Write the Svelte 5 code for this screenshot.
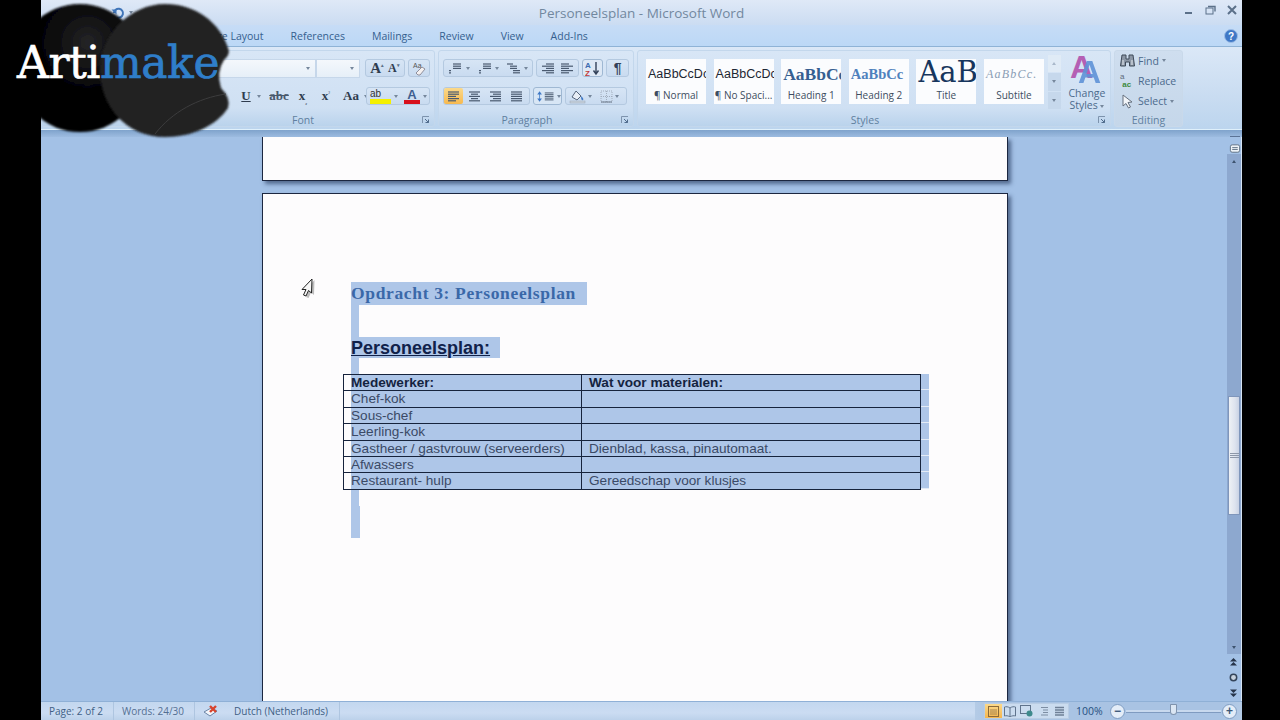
<script>
  const tabs = ['Page Layout', 'References', 'Mailings', 'Review', 'View', 'Add-Ins'];

  const gallery = [
    { sample: 'AaBbCcDc', name: '¶ Normal', kind: 'plain' },
    { sample: 'AaBbCcDc', name: '¶ No Spaci...', kind: 'plain' },
    { sample: 'AaBbCc', name: 'Heading 1', kind: 'h1' },
    { sample: 'AaBbCc', name: 'Heading 2', kind: 'h2' },
    { sample: 'AaB', name: 'Title', kind: 'title' },
    { sample: 'AaBbCc.', name: 'Subtitle', kind: 'sub' }
  ];

  const rows = [
    { left: 'Medewerker:', right: 'Wat voor materialen:', head: true, h: 16 },
    { left: 'Chef-kok', right: '', h: 17 },
    { left: 'Sous-chef', right: '', h: 16 },
    { left: 'Leerling-kok', right: '', h: 17 },
    { left: 'Gastheer / gastvrouw (serveerders)', right: 'Dienblad, kassa, pinautomaat.', h: 16 },
    { left: 'Afwassers', right: '', h: 16 },
    { left: 'Restaurant- hulp', right: 'Gereedschap voor klusjes', h: 17 }
  ];

  const alignments = [
    { on: true, lines: [[2, 13], [2, 13], [2, 10], [2, 13], [2, 10]] },
    { lines: [[2, 13], [4, 11], [2, 13], [4, 11], [2, 13]] },
    { lines: [[2, 13], [5, 13], [2, 13], [5, 13], [2, 13]] },
    { lines: [[2, 13], [2, 13], [2, 13], [2, 13], [2, 13]] }
  ];
</script>

{#snippet lines(list)}
  <svg width="15" height="13" viewBox="0 0 15 13">
    {#each list as l, i}
      <line x1={l[0]} x2={l[1]} y1={2 + i * 2.2} y2={2 + i * 2.2} stroke="#4a5a70" stroke-width="1.2" />
    {/each}
  </svg>
{/snippet}

{#snippet launcher()}
  <svg class="launcher" width="8" height="8" viewBox="0 0 8 8">
    <path d="M0.5 7V0.5H7" fill="none" stroke="#7d93ad" />
    <path d="M3 3l3.5 3.5M6.5 3.5v3h-3" fill="none" stroke="#4f6b8c" />
  </svg>
{/snippet}

<div class="screen">
  <div class="word">
    <header class="titlebar">
      <div class="quick">
        <svg width="14" height="14" viewBox="0 0 14 14">
          <path d="M3 7a4.5 4.5 0 1 1 3 4.5" fill="none" stroke="#3f74b8" stroke-width="2" />
          <path d="M0.5 3.5h5v5z" fill="#3f74b8" />
        </svg>
        <i class="caret"></i>
      </div>
      <div class="doc-title">Personeelsplan - Microsoft Word</div>
      <div class="winbtns">
        <svg width="10" height="10" viewBox="0 0 10 10"><rect x="1" y="7" width="7" height="2" fill="#5b7089" /></svg>
        <svg width="11" height="10" viewBox="0 0 11 10"><rect x="1" y="3" width="7" height="6" fill="none" stroke="#5b7089" /><path d="M3 1.5h7v5" fill="none" stroke="#5b7089" stroke-width="1.4" /></svg>
        <svg width="10" height="10" viewBox="0 0 10 10"><path d="M1 1l8 8M9 1l-8 8" stroke="#5b7089" stroke-width="2" /></svg>
      </div>
    </header>

    <nav class="tabs">
      {#each tabs as tab}
        <span>{tab}</span>
      {/each}
      <svg class="help" width="14" height="14" viewBox="0 0 14 14">
        <circle cx="7" cy="7" r="6.5" fill="#3f78c6" stroke="#9dbde6" />
        <text x="7" y="11" text-anchor="middle" font-size="10" font-weight="700" font-family="Liberation Sans, sans-serif" fill="#fff">?</text>
      </svg>
    </nav>

    <section class="ribbon">
      <div class="group clipboard">
        <div class="group-body"></div>
      </div>

      <div class="group font">
        <div class="group-body">
          <div class="tool-row right">
            <div class="combo wide"><i class="caret"></i></div>
            <div class="combo narrow"><i class="caret"></i></div>
            <div class="box grow-box">
              <span class="serif big">A<sup>▴</sup></span>
              <span class="serif small-a">A<sup>▾</sup></span>
            </div>
            <div class="box clear-box">
              <svg width="16" height="15" viewBox="0 0 16 15">
                <text x="2" y="7" font-size="7" font-family="Liberation Sans, sans-serif" fill="#555">Aa</text>
                <path d="M5 12l6-6 3 2-5 6H7z" fill="#f4f0f0" stroke="#8f8f9c" />
              </svg>
            </div>
          </div>
          <div class="tool-row right">
            <span class="tool serif u">U</span><i class="caret"></i>
            <span class="tool serif strike">abc</span>
            <span class="tool serif xs">x<sub>₂</sub></span>
            <span class="tool serif xs">x<sup>²</sup></span>
            <span class="tool serif aa">Aa</span><i class="caret"></i>
            <div class="box color-box">
              <span class="marker">ab</span><i class="caret"></i>
              <span class="font-color">A</span><i class="caret"></i>
            </div>
          </div>
        </div>
        <div class="group-label">Font {@render launcher()}</div>
      </div>

      <div class="group para">
        <div class="group-body">
          <div class="tool-row">
            <div class="box list-box">
              <span class="list-tool">{@render lines([[5, 13], [5, 13], [5, 13], [1, 3], [1, 3]])}<i class="caret"></i></span>
              <span class="list-tool">{@render lines([[6, 14], [6, 14], [6, 14], [2, 4], [2, 4]])}<i class="caret"></i></span>
              <span class="list-tool">{@render lines([[1, 7], [4, 11], [4, 11], [7, 14], [7, 14]])}<i class="caret"></i></span>
            </div>
            <div class="box indent-box">
              {@render lines([[6, 14], [2, 14], [6, 14], [2, 14], [6, 14]])}
              {@render lines([[1, 9], [1, 13], [1, 9], [1, 13], [1, 9]])}
            </div>
            <div class="box sort-box">
              <svg width="16" height="15" viewBox="0 0 16 15">
                <text x="0" y="7" font-size="8" font-weight="700" font-family="Liberation Sans, sans-serif" fill="#3b6bb0">A</text>
                <text x="0" y="14.5" font-size="8" font-weight="700" font-family="Liberation Sans, sans-serif" fill="#c23b3b">Z</text>
                <path d="M11 1v11M8.5 9.5L11 13l2.500-3.500" fill="none" stroke="#33425a" stroke-width="1.4" />
              </svg>
            </div>
            <div class="box pilcrow">¶</div>
          </div>
          <div class="tool-row">
            <div class="box align-box">
              {#each alignments as a}
                <span class="align" class:on={a.on}>{@render lines(a.lines)}</span>
              {/each}
            </div>
            <div class="box spacing-box">
              <svg width="9" height="15" viewBox="0 0 9 15">
                <path d="M4.500 1L1.500 5h6zM4.500 14l-3-4h6z" fill="#3f78c6" />
                <path d="M4.500 4v7" stroke="#3f78c6" />
              </svg>
              {@render lines([[1, 12], [1, 12], [1, 12], [1, 12], [1, 12]])}
              <i class="caret"></i>
            </div>
            <div class="box shade-box">
              <svg width="17" height="16" viewBox="0 0 17 16">
                <path d="M3 9l4-6 5 5-4 4z" fill="#e8eef6" stroke="#56657c" />
                <path d="M12 8c2 2 3 3 2 4s-2 0-2-4z" fill="#3f78c6" />
                <rect x="1" y="13" width="15" height="2" fill="#c9d3de" stroke="#98a5b5" stroke-width=".5" />
              </svg>
              <i class="caret"></i>
              <svg class="border-icon" width="13" height="13" viewBox="0 0 13 13">
                <rect x="1" y="1" width="11" height="11" fill="none" stroke="#a2aebd" stroke-dasharray="1 1" />
                <path d="M6.500 1v11M1 6.500h11" stroke="#a2aebd" stroke-dasharray="1 1" />
                <path d="M1 12h11" stroke="#6d7a8c" />
              </svg>
              <i class="caret"></i>
            </div>
          </div>
        </div>
        <div class="group-label">Paragraph {@render launcher()}</div>
      </div>

      <div class="group styles">
        <div class="group-body styles-body">
          <div class="gallery">
            {#each gallery as item}
              <div class="tile">
                <div class="sample {item.kind}">{item.sample}</div>
                <div class="tile-name">{item.name}</div>
              </div>
            {/each}
          </div>
          <div class="gallery-scroll">
            <span class="first-btn"><i class="caret up"></i></span>
            <span><i class="caret"></i></span>
            <span class="more"><i class="caret"></i></span>
          </div>
          <div class="change-styles">
            <div class="aa-icon"><b class="pink">A</b><b class="blue">A</b></div>
            <div class="change-label">Change<br />Styles <i class="caret"></i></div>
          </div>
        </div>
        <div class="group-label">Styles {@render launcher()}</div>
      </div>

      <div class="group editing">
        <div class="group-body edit-list">
          <div class="edit-item">
            <svg width="15" height="14" viewBox="0 0 15 14">
              <path d="M2 1h4v4h3V1h4l1.500 11H9.500V8h-4v4H.5z" fill="#8c97a6" stroke="#3f4a59" />
              <path d="M3 6v5M12 6v5" stroke="#e6ebf1" />
            </svg>
            Find <i class="caret"></i>
          </div>
          <div class="edit-item">
            <span class="replace-icon">a<br /><b>&nbsp;ac</b></span>
            Replace
          </div>
          <div class="edit-item">
            <svg width="15" height="15" viewBox="0 0 15 15">
              <path d="M3 1l9 7-4 .5 2.500 4.500-2 1L6 9.500 3 12z" fill="#f2f5f9" stroke="#66717f" />
            </svg>
            Select <i class="caret"></i>
          </div>
        </div>
        <div class="group-label">Editing</div>
      </div>
    </section>
    <div class="ribbon-edge"></div>

    <main class="workspace">
      <div class="pages">
        <div class="page first"></div>
        <div class="page second">
          <div class="sel heading-line"><span class="doc-heading">Opdracht 3: Personeelsplan</span></div>
          <div class="sel blank"></div>
          <div class="sel sub-line"><span class="doc-sub">Personeelsplan:</span></div>
          <div class="sel blank short"></div>

          <div class="table-wrap">
            <table>
              <tbody>
                {#each rows as row}
                  <tr class:head={row.head} style="height: {row.h}px">
                    <td class="col-a">{row.left}</td>
                    <td class="col-b">{row.right}</td>
                  </tr>
                {/each}
              </tbody>
            </table>
            <div class="row-ends">
              {#each rows as row}
                <span style="height: {row.h}px"></span>
              {/each}
            </div>
          </div>

          <div class="sel blank after"></div>
          <div class="sel blank after2"></div>
        </div>
      </div>

      <aside class="scrollbar">
        <div class="sb-ruler">
          <i class="dash"></i>
          <svg width="12" height="12" viewBox="0 0 12 12">
            <rect x="1" y="2" width="10" height="8" rx="2" fill="#eef3f8" stroke="#5b6c80" />
            <path d="M3 5h6M3 7h6" stroke="#5b6c80" />
          </svg>
        </div>
        <div class="sb-track">
          <div class="sb-btn"><i class="caret up dark"></i></div>
          <div class="sb-space top"></div>
          <div class="sb-thumb"><i></i><i></i><i></i></div>
          <div class="sb-space"></div>
          <div class="sb-btn"><i class="caret dark"></i></div>
        </div>
        <div class="sb-browse">
          <svg width="9" height="8" viewBox="0 0 9 8"><path d="M4.500 0L8 3.500H1zM4.500 4L8 7.500H1z" fill="#26344a" /></svg>
          <svg width="9" height="9" viewBox="0 0 9 9"><circle cx="4.500" cy="4.500" r="3.200" fill="#c7d2de" stroke="#34445a" stroke-width="1.500" /></svg>
          <svg width="9" height="8" viewBox="0 0 9 8"><path d="M1 .5h7L4.500 4zM1 4.500h7L4.500 8z" fill="#26344a" /></svg>
        </div>
      </aside>
    </main>

    <footer class="status">
      <span class="st page-count">Page: 2 of 2</span>
      <span class="st word-count">Words: 24/30</span>
      <span class="st spell">
        <svg width="16" height="14" viewBox="0 0 16 14">
          <path d="M1 8l6 4 7-5-6-3z" fill="#f2f5fa" stroke="#6c86a8" />
          <path d="M7 2l6 6M13 2L7 8" stroke="#d8442e" stroke-width="2.400" />
        </svg>
      </span>
      <span class="st lang">Dutch (Netherlands)</span>
      <div class="status-right">
        <div class="views">
          <span class="view on"><svg width="11" height="11" viewBox="0 0 11 11"><rect x=".5" y=".5" width="10" height="10" fill="none" stroke="#8a6a3a" /><path d="M2 4h7M2 6h7M2 8h7" stroke="#a58450" /></svg></span>
          <span class="view"><svg width="12" height="11" viewBox="0 0 12 11"><path d="M6 2C4 .5 2 .5 .5 1v9c1.500-.5 3.500-.5 5.500 1 2-1.500 4-1.500 5.500-1V1C10 .5 8 .5 6 2zv9" fill="none" stroke="#5f738c" /></svg></span>
          <span class="view"><svg width="13" height="12" viewBox="0 0 13 12"><rect x=".5" y=".5" width="10" height="8" fill="none" stroke="#5f738c" /><circle cx="9.500" cy="8.500" r="3" fill="#3e8a8c" /></svg></span>
          <span class="view"><svg width="11" height="11" viewBox="0 0 11 11"><path d="M3 1.500h7M5 4h5M5 6.500h5M3 9h7" stroke="#7d8ea3" /></svg></span>
          <span class="view"><svg width="11" height="11" viewBox="0 0 11 11"><path d="M1 1.500h9M1 4h9M1 6.500h9M1 9h9" stroke="#6f8097" stroke-width="1.300" /></svg></span>
        </div>
        <span class="zoom-pct">100%</span>
        <span class="zoom-btn">−</span>
        <div class="slider"><i class="thumb"></i></div>
        <span class="zoom-btn">+</span>
      </div>
    </footer>
  </div>

  <div class="logo">
    <svg width="240" height="142" viewBox="0 0 240 142">
      <defs>
        <radialGradient id="glow" cx="0.56" cy="0.3" r="0.5">
          <stop offset="0" stop-color="#252527" />
          <stop offset="0.6" stop-color="#080809" />
          <stop offset="1" stop-color="#000" />
        </radialGradient>
        <filter id="soft"><feGaussianBlur stdDeviation="0.8" /></filter>
      </defs>
      <circle cx="80" cy="68" r="64" fill="url(#glow)" filter="url(#soft)" />
      <path
        d="M165 4C195 4 220 22 228 48Q231 54 224 60Q216 72 221 88Q231 98 228 108C216 126 192 137 165 137C125 137 100 105 100 70C100 35 130 4 165 4Z"
        fill="#232324"
        filter="url(#soft)"
      />
      <path d="M155 134C172 112 198 98 226 94" fill="none" stroke="#3c3c3d" stroke-width="1" />
    </svg>
    <div class="logo-text">Arti<span>make</span></div>
  </div>

  <svg class="pointer" width="16" height="22" viewBox="0 0 16 22">
    <path d="M13 1L12.500 16 9.500 13.500 7 19 4.500 18 7 12.500 3 12.500Z" fill="#000" opacity="0.25" transform="translate(1.500 1)" />
    <path d="M12 1L11.500 15 8.500 12.500 6 18 3.500 17 6 11.500 2 11.500Z" fill="#f7f7f7" stroke="#222" stroke-width="1" stroke-linejoin="round" />
  </svg>
</div>

<style>
  :global(body) {
    margin: 0;
    background: #000;
  }

  .screen {
    position: relative;
    width: 1280px;
    height: 720px;
    overflow: hidden;
    background: #000;
    font-family: "Open Sans", "Noto Sans", sans-serif;
  }

  .word {
    margin-left: 41px;
    width: 1201px;
    height: 720px;
    display: flex;
    flex-direction: column;
    background: #a3c1e6;
  }

  i {
    display: block;
  }

  .caret {
    display: inline-block;
    width: 0;
    height: 0;
    border-left: 2.500px solid transparent;
    border-right: 2.500px solid transparent;
    border-top: 3px solid #76879c;
    vertical-align: middle;
  }

  .caret.up {
    border-top: 0;
    border-bottom: 3px solid #a9b8ca;
  }

  /* title and tabs */
  .titlebar {
    height: 25px;
    display: grid;
    grid-template-columns: 1fr auto 1fr;
    align-items: center;
    background: linear-gradient(#dfe9f7, #cbdcf2);
  }

  .quick {
    display: flex;
    align-items: center;
    gap: 4px;
    padding-left: 70px;
  }

  .doc-title {
    font-size: 13.500px;
    color: #72889f;
  }

  .winbtns {
    display: flex;
    justify-content: flex-end;
    align-items: center;
    gap: 11px;
    padding-right: 5px;
    margin-top: -5px;
  }

  .tabs {
    height: 22px;
    display: flex;
    align-items: center;
    gap: 27px;
    padding-left: 163px;
    box-sizing: border-box;
    background: linear-gradient(#c6dcf6, #bcd8f6);
    border-bottom: 1px solid #8fb3d6;
    font-size: 10.500px;
    color: #35608f;
  }

  .help {
    margin-left: auto;
    margin-right: 4px;
  }

  /* ribbon */
  .ribbon {
    height: 83px;
    display: flex;
    gap: 3px;
    padding: 3px 0 2px;
    box-sizing: border-box;
    background: linear-gradient(#dbe8f7, #c9dcf1 60%, #bcd5ee);
    border-bottom: 1px solid #dff0fb;
  }

  .ribbon-edge {
    height: 7px;
    background: linear-gradient(#7fa3cc, #9dbbe0);
  }

  .group {
    display: flex;
    flex-direction: column;
    box-sizing: border-box;
    border: 1px solid #c3d7ec;
    border-radius: 3px;
    background: linear-gradient(#d8e6f6, #cfe0f3 76%, #bad3ec);
  }

  .group-body {
    flex: 1;
    min-height: 0;
    display: flex;
    flex-direction: column;
    gap: 10px;
    padding-top: 8px;
  }

  .group-label {
    position: relative;
    height: 16px;
    flex: none;
    text-align: center;
    font-size: 10.500px;
    line-height: 21px;
    color: #5f7f9f;
  }

  .launcher {
    position: absolute;
    right: 4px;
    top: 6px;
  }

  .clipboard {
    width: 123px;
  }

  .font {
    width: 268px;
  }

  .font .group-label {
    padding-left: 4px;
  }

  .para {
    width: 196px;
  }

  .styles {
    width: 474px;
  }

  .para .group-label,
  .styles .group-label {
    padding-right: 18px;
  }

  .editing {
    width: 69px;
    background: linear-gradient(#cfdeef, #c5d7ea);
    border-color: #c9d9ea;
  }

  .tool-row {
    height: 18px;
    display: flex;
    align-items: center;
    gap: 3px;
    padding: 0 4px;
  }

  .tool-row.right {
    justify-content: flex-end;
  }

  .box {
    height: 18px;
    box-sizing: border-box;
    display: flex;
    align-items: center;
    border: 1px solid #b4c9e0;
    border-radius: 3px;
    background: linear-gradient(#d7e5f5, #c9dbf0);
  }

  .combo {
    height: 19px;
    box-sizing: border-box;
    display: flex;
    align-items: center;
    justify-content: flex-end;
    padding-right: 5px;
    background: linear-gradient(#f4f8fc, #e6eff8);
    border: 1px solid #c6d7ea;
  }

  .combo.wide {
    width: 140px;
    margin-right: -3px;
  }

  .combo.narrow {
    width: 44px;
    margin-right: 2px;
  }

  .serif {
    font-family: "Liberation Serif", serif;
    font-weight: 700;
    color: #2f3c4e;
  }

  .serif sup {
    font-size: 5px;
    color: #5b7089;
  }

  .grow-box {
    width: 40px;
    justify-content: center;
    gap: 4px;
  }

  .big {
    font-size: 15px;
  }

  .small-a {
    font-size: 12px;
  }

  .clear-box {
    width: 22px;
    justify-content: center;
  }

  .tool {
    text-align: center;
    font-size: 13px;
  }

  .u {
    width: 18px;
    text-decoration: underline;
    margin-right: -1px;
  }

  .strike {
    width: 22px;
    margin-left: 4px;
    text-decoration: line-through;
    color: #49586c;
  }

  .xs {
    width: 20px;
  }

  .xs sub,
  .xs sup {
    font-size: 6px;
    line-height: 0;
  }

  .aa {
    width: 24px;
    margin-right: -2px;
  }

  .color-box {
    width: 64px;
    flex: none;
    margin-left: -5px;
    gap: 3px;
    padding-left: 3px;
  }

  .marker {
    width: 21px;
    height: 16px;
    font: 10px/11px "Liberation Sans", sans-serif;
    color: #333;
    background: linear-gradient(transparent 11px, #f4f000 11px);
  }

  .font-color {
    width: 16px;
    margin-left: 3px;
    height: 16px;
    text-align: center;
    font: 700 13px/13px "Liberation Sans", sans-serif;
    color: #3f5f90;
    background: linear-gradient(transparent 12px, #d8101c 12px);
  }

  .list-box {
    width: 92px;
    justify-content: space-around;
  }

  .list-tool {
    display: flex;
    align-items: center;
    gap: 3px;
  }

  .indent-box {
    width: 44px;
    justify-content: space-around;
  }

  .sort-box {
    width: 22px;
    justify-content: center;
    background: #dde8f5;
    border-color: #9fb8d3;
  }

  .pilcrow {
    width: 23px;
    justify-content: center;
    font: 700 14px "Liberation Sans", sans-serif;
    color: #33425a;
  }

  .align-box {
    width: 87px;
    justify-content: space-between;
    padding-right: 3px;
    gap: 2px;
  }

  .align {
    width: 19px;
    height: 16px;
    display: flex;
    align-items: center;
    justify-content: center;
  }

  .align.on {
    background: linear-gradient(#fbd98a, #f7b94f);
    border-radius: 2px;
  }

  .spacing-box {
    width: 29px;
    gap: 1px;
    padding-left: 2px;
    background: #d8e6f5;
    border-color: #9fb8d3;
  }

  .shade-box {
    width: 62px;
    gap: 2px;
    padding-left: 3px;
  }

  .border-icon {
    margin-left: 6px;
  }

  .styles-body {
    flex-direction: row;
    gap: 4px;
    padding-left: 8px;
  }

  .gallery {
    display: flex;
    gap: 7.600px;
    height: 45px;
  }

  .tile {
    width: 60px;
    height: 45px;
    overflow: hidden;
    background: #fbfcfe;
    display: flex;
    flex-direction: column;
  }

  .sample {
    height: 28px;
    line-height: 30px;
    padding-left: 2px;
    white-space: nowrap;
    font-size: 12.500px;
    color: #1d2733;
    font-family: "Liberation Sans", sans-serif;
  }

  .sample.h1 {
    font: 700 17.500px/30px "Liberation Serif", serif;
    color: #365f91;
  }

  .sample.h2 {
    font: 700 14.500px/30px "Liberation Serif", serif;
    color: #4f81bd;
  }

  .sample.title {
    font: 29px/26px "DejaVu Serif", serif;
    color: #17365d;
  }

  .sample.sub {
    font: italic 12px/30px "Liberation Serif", serif;
    letter-spacing: 1.200px;
    color: #8a9db5;
  }

  .tile-name {
    font-size: 10px;
    line-height: 16px;
    text-align: center;
    white-space: nowrap;
    color: #3d4c60;
  }

  .gallery-scroll {
    width: 13px;
    height: 54px;
    margin-top: -4px;
    display: flex;
    flex-direction: column;
    gap: 1px;
  }

  .gallery-scroll span {
    flex: 1;
    display: flex;
    align-items: center;
    justify-content: center;
    background: #c6d8ec;
  }

  .gallery-scroll .first-btn {
    background: #e0ebf6;
  }

  .change-styles {
    width: 44px;
    text-align: center;
  }

  .aa-icon {
    position: relative;
    height: 32px;
    margin-top: -4px;
  }

  .aa-icon b {
    position: absolute;
    font: 700 32px/28px "Liberation Sans", sans-serif;
  }

  .pink {
    left: 5px;
    top: -2px;
    color: #b45fb4;
  }

  .blue {
    left: 13px;
    top: 3px;
    color: #5f93d8;
    opacity: 0.9;
  }

  .change-label {
    font-size: 10.500px;
    line-height: 12px;
    color: #4c6a8c;
    white-space: nowrap;
  }

  .edit-list {
    gap: 2.500px;
    padding-top: 1px;
    padding-left: 5px;
  }

  .edit-item {
    height: 18px;
    display: flex;
    align-items: center;
    gap: 3px;
    font-size: 10.500px;
    color: #4c6a8c;
  }

  .replace-icon {
    width: 15px;
    font: 8px/8px "Liberation Sans", sans-serif;
    color: #5d6a7a;
  }

  .replace-icon b {
    color: #3d8a3d;
  }

  /* document */
  .workspace {
    flex: 1;
    min-height: 0;
    display: flex;
  }

  .pages {
    flex: 1;
    min-width: 0;
    overflow: hidden;
    display: flex;
    flex-direction: column;
    align-items: center;
    gap: 12px;
    padding-left: 2px;
    background: #a3c1e6;
  }

  .page {
    width: 746px;
    flex: none;
    box-sizing: border-box;
    background: #fdfcfd;
    border: 1px solid #1c2740;
    box-shadow: 3px 3px 4px rgba(40, 60, 95, 0.65);
  }

  .first {
    height: 44px;
    border-top: 0;
  }

  .second {
    height: 1050px;
    padding: 88px 0 0 88px;
  }

  .sel {
    background: #aec6e8;
    width: max-content;
  }

  .heading-line {
    height: 23px;
    padding-right: 11px;
  }

  .doc-heading {
    font: 700 17.500px/22px "Liberation Serif", serif;
    letter-spacing: 0.650px;
    color: #3a68a8;
  }

  .blank {
    width: 8px;
    height: 32px;
  }

  .blank.short {
    height: 16px;
  }

  .sub-line {
    height: 21px;
    padding-right: 10px;
  }

  .doc-sub {
    font: 700 18px/21px "Liberation Sans", sans-serif;
    color: #10214a;
    text-decoration: underline;
  }

  .table-wrap {
    display: flex;
    margin-left: -8px;
  }

  table {
    width: 578px;
    table-layout: fixed;
    border-collapse: collapse;
    font: 13.600px/14px "Liberation Sans", sans-serif;
    color: #3b4a66;
  }

  td {
    padding: 0 0 0 7px;
    border: 1px solid #16233c;
    background: #aec6e8;
    white-space: nowrap;
    overflow: hidden;
  }

  .col-a {
    width: 230px;
    background-clip: content-box;
  }

  .head td {
    font-weight: 700;
    color: #14233f;
  }

  .row-ends {
    display: flex;
    flex-direction: column;
    width: 8px;
  }

  .row-ends span {
    box-sizing: border-box;
    background: #aec6e8;
    border-bottom: 1px solid #e3ebf6;
  }

  .blank.after {
    height: 16px;
    width: 8px;
  }

  .blank.after2 {
    height: 32px;
    width: 9px;
  }

  .scrollbar {
    width: 15px;
    flex: none;
    display: flex;
    flex-direction: column;
    background: #a3c1e6;
    box-shadow: inset -1px 0 #d5e3f3;
  }

  .sb-ruler {
    height: 17px;
    display: flex;
    flex-direction: column;
    align-items: center;
    padding-top: 2px;
    box-sizing: border-box;
  }

  .dash {
    width: 10px;
    height: 1px;
    background: #5b7396;
    margin-top: -3px;
    margin-bottom: 6px;
  }

  .sb-track {
    flex: 1;
    min-height: 0;
    display: flex;
    flex-direction: column;
    margin-right: 1px;
    background: #8da8cf;
  }

  .sb-btn {
    height: 14px;
    display: flex;
    align-items: center;
    justify-content: center;
    background: #8da8cf;
  }

  .caret.dark {
    border-top-color: #3e536f;
    border-bottom-color: #3e536f;
  }

  .sb-space {
    flex: 1;
  }

  .sb-space.top {
    flex: none;
    height: 228px;
  }

  .sb-thumb {
    height: 119px;
    box-sizing: border-box;
    margin: 0 1px;
    border: 1px solid #7f96bb;
    background: linear-gradient(90deg, #eef1f5, #dde3ee 60%, #c9d2e4);
    display: flex;
    flex-direction: column;
    justify-content: center;
    gap: 1px;
    align-items: center;
  }

  .sb-thumb i {
    width: 9px;
    height: 1px;
    background: #8d97a8;
  }

  .sb-browse {
    height: 47px;
    display: flex;
    flex-direction: column;
    align-items: center;
    justify-content: space-around;
    padding-right: 2px;
  }

  /* status bar */
  .status {
    height: 19px;
    display: flex;
    align-items: center;
    font-size: 10px;
    color: #546f92;
    background: linear-gradient(#c3d7ef, #cbdcf2 60%, #bcd1ea);
    border-top: 1px solid #8fb0d6;
    box-sizing: border-box;
  }

  .st {
    height: 100%;
    display: flex;
    align-items: center;
    box-sizing: border-box;
    border-right: 1px solid #aec5e0;
    white-space: nowrap;
  }

  .page-count {
    width: 73px;
    padding-left: 8px;
    color: #3f5f85;
  }

  .word-count {
    width: 81px;
    padding-left: 8px;
  }

  .spell {
    width: 39px;
    padding-left: 8px;
    border-right: 0;
  }

  .lang {
    width: 106px;
    color: #3f5f85;
  }

  .status-right {
    margin-left: auto;
    width: 267px;
    height: 100%;
    display: flex;
    align-items: center;
    background: linear-gradient(90deg, #b4cbe6, #a9c3e3 8%, #a9c3e3 92%, #b4cbe6);
  }

  .views {
    display: flex;
    margin-left: 9px;
    height: 16px;
    box-sizing: border-box;
    border: 1px solid #b9cde4;
    background: #cbdcef;
  }

  .view {
    width: 16.600px;
    display: flex;
    align-items: center;
    justify-content: center;
  }

  .view.on {
    background: linear-gradient(#fbd98a, #f5b64e);
  }

  .zoom-pct {
    margin-left: 7px;
    width: 34px;
    font-size: 10.500px;
    color: #27507f;
  }

  .zoom-btn {
    width: 13px;
    height: 13px;
    flex: none;
    border-radius: 50%;
    border: 1px solid #7e9cc2;
    background: #e4edf8;
    color: #3d5878;
    font: 700 12px/12px "Liberation Sans", sans-serif;
    text-align: center;
  }

  .slider {
    position: relative;
    width: 95px;
    height: 2px;
    margin: 0 1px;
    background: #c8d9ee;
    border-bottom: 1px solid #7f9bc0;
  }

  .thumb {
    position: absolute;
    left: 44px;
    top: -6px;
    width: 7px;
    height: 11px;
    box-sizing: border-box;
    background: #dbe6f3;
    border: 1px solid #7f93ad;
    border-radius: 1px 1px 4px 4px;
  }

  /* logo lies over the ribbon */
  .logo {
    position: absolute;
    left: 0;
    top: 0;
    width: 240px;
    height: 142px;
  }

  .logo svg {
    display: block;
  }

  .logo-text {
    position: absolute;
    left: 17px;
    top: 36px;
    font: 44px/54px "DejaVu Serif", serif;
    color: #fff;
    white-space: nowrap;
    letter-spacing: -0.400px;
    -webkit-text-stroke: 0.7px currentColor;
  }

  .logo-text span {
    color: #2f7ec9;
  }

  /* mouse pointer over the page */
  .pointer {
    position: absolute;
    left: 300px;
    top: 278px;
  }
</style>
